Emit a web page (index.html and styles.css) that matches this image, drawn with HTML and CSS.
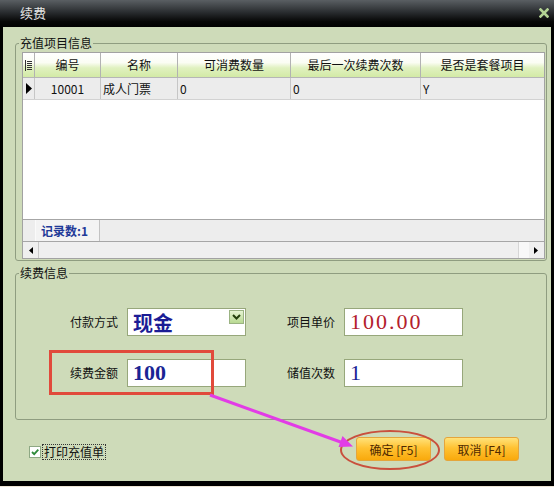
FILE: index.html
```html
<!DOCTYPE html>
<html lang="zh-CN">
<head>
  <meta charset="UTF-8">
  <title>续费</title>
  <link rel="stylesheet" href="styles.css">
</head>
<body>
  <div class="window">
    <div class="titlebar">
      <span class="title">续费</span>
      <svg class="close" viewBox="0 0 10 10"><path d="M1.5 1.5L8.5 8.5M8.5 1.5L1.5 8.5" stroke="#b3d394" stroke-width="2.6" stroke-linecap="square"/></svg>
    </div>

    <div class="body">
      <fieldset class="group group-items">
        <legend>充值项目信息</legend>
        <div class="grid">
          <div class="grid-head">
            <div class="cell ind">
              <svg width="7" height="11" viewBox="0 0 7 11"><path d="M0.5 0V11M2 1.5H7M2 3.5H7M2 5.5H7M2 7.5H7M2 9.5H7" stroke="#333" stroke-width="1"/></svg>
            </div>
            <div class="cell">编号</div>
            <div class="cell">名称</div>
            <div class="cell">可消费数量</div>
            <div class="cell">最后一次续费次数</div>
            <div class="cell">是否是套餐项目</div>
          </div>
          <div class="grid-row">
            <div class="cell ind">
              <svg width="6" height="11" viewBox="0 0 6 11"><path d="M0 0L6 5.5L0 11Z" fill="#000"/></svg>
            </div>
            <div class="cell center">10001</div>
            <div class="cell">成人门票</div>
            <div class="cell">0</div>
            <div class="cell">0</div>
            <div class="cell">Y</div>
          </div>
          <div class="grid-empty"></div>
          <div class="grid-foot">
            <span class="record-count">记录数:1</span>
          </div>
          <div class="hscroll">
            <span class="scroll-btn left">
              <svg width="4" height="7" viewBox="0 0 4 7"><path d="M4 0L0 3.5L4 7Z" fill="#000"/></svg>
            </span>
            <span class="scroll-track"></span>
            <span class="scroll-btn right">
              <svg width="4" height="7" viewBox="0 0 4 7"><path d="M0 0L4 3.5L0 7Z" fill="#000"/></svg>
            </span>
          </div>
        </div>
      </fieldset>

      <fieldset class="group group-renew">
        <legend>续费信息</legend>
        <div class="form">
          <label class="form-label">付款方式</label>
          <div class="field select">
            <span class="pay-type">现金</span>
            <span class="drop-btn">
              <svg width="9" height="6" viewBox="0 0 9 6"><path d="M1 1L4.5 4.5L8 1" fill="none" stroke="#24400c" stroke-width="2"/></svg>
            </span>
          </div>
          <label class="form-label">项目单价</label>
          <div class="field price">100.00</div>
          <label class="form-label">续费金额</label>
          <div class="field number bold">100</div>
          <label class="form-label">储值次数</label>
          <div class="field number">1</div>
        </div>
      </fieldset>

      <div class="actions">
        <div class="print">
          <span class="check">
            <svg width="10" height="10" viewBox="0 0 10 10"><path d="M2 5L4.2 7.2L8.3 2.6" fill="none" stroke="#2e8a3a" stroke-width="1.8"/></svg>
          </span>
          <span class="print-label">打印充值单</span>
        </div>
        <div class="buttons">
          <button class="btn">确定 [F5]</button>
          <button class="btn">取消 [F4]</button>
        </div>
      </div>
    </div>

    <!-- annotations -->
    <div class="mark-box"></div>
    <div class="mark-ring"></div>
    <svg class="mark-arrow" width="554" height="487" viewBox="0 0 554 487">
      <line x1="210" y1="395" x2="342" y2="442.5" stroke="#e23ce6" stroke-width="3"/>
      <polygon points="353,446.5 338.5,447 342.5,436" fill="#e23ce6"/>
    </svg>
  </div>
</body>
</html>
```

FILE: styles.css
```css
* {
  box-sizing: border-box;
}
body {
  margin: 0;
  background: #efe6d6;
  font-family: "Noto Sans CJK SC", "Liberation Sans", sans-serif;
  font-size: 12px;
  color: #111;
}
.window {
  position: relative;
  width: 554px;
  height: 486px;
  background: #000;
  padding: 0 3px 5px;
  display: flex;
  flex-direction: column;
}
.titlebar {
  height: 27px;
  margin: 0 -3px;
  padding: 0 5px 2px 20px;
  display: flex;
  align-items: center;
  justify-content: space-between;
  background: linear-gradient(#5a5f63, #2a2d30 45%, #060606 80%, #000);
}
.title {
  color: #e4e4e4;
  font-size: 13px;
  line-height: 16px;
}
.close {
  width: 10px;
  height: 10px;
}
.body {
  flex: 1;
  background: #cedbb9;
  display: flex;
  flex-direction: column;
}
/* group boxes */
.group {
  margin: 8px 4px 0 12px;
  padding: 1px 1px 1px 6px;
  border: 1px solid #8f9d80;
  border-radius: 3px;
  min-width: 0;
}
.group legend {
  padding: 0 1px;
  margin-left: -3px;
  line-height: 16px;
}
.group-renew {
  margin-top: 4px;
  padding: 27px 1px 32px 6px;
}
/* data grid */
.grid {
  height: 207px;
  border: 1px solid #a2a2a2;
  background: #fff;
  display: flex;
  flex-direction: column;
}
.grid-head,
.grid-row {
  display: grid;
  grid-template-columns: 12px 66px 77px 113px 130px 1fr;
}
.grid-head {
  height: 25px;
  border-bottom: 1px solid #b6b6b6;
  background: linear-gradient(#ffffff 0%, #fbfdf4 40%, #e0f1c0 62%, #d3eaa6 100%);
}
.grid-head .cell {
  display: flex;
  align-items: center;
  justify-content: center;
  border-right: 1px solid #b2b2b2;
  line-height: 16px;
}
.grid-head .cell:last-child {
  border-right: none;
}
.grid-row {
  height: 22px;
  background: #ececec;
  border-bottom: 1px solid #d2d2d2;
}
.grid-row .cell {
  border-right: 1px solid #c6c6c6;
  padding-left: 2px;
  line-height: 21px;
}
.grid-row .cell:last-child {
  border-right: none;
}
.grid-row .center {
  text-align: center;
  padding-left: 0;
}
.cell.ind {
  display: flex;
  align-items: center;
  justify-content: center;
  padding-left: 0;
}
.grid-empty {
  flex: 1;
}
.grid-foot {
  height: 22px;
  border-top: 1px solid #a6a6a6;
  background: #ededed;
  padding-left: 12px;
  display: flex;
}
.record-count {
  width: 65px;
  padding-left: 5px;
  border-left: 1px solid #fafafa;
  border-right: 1px solid #c2c2c2;
  background: #f3f3f3;
  color: #1f3a98;
  font-weight: bold;
  line-height: 21px;
}
.hscroll {
  height: 17px;
  border-top: 1px solid #a6a6a6;
  background: #efefef;
  display: flex;
}
.scroll-btn {
  width: 16px;
  display: flex;
  align-items: center;
  justify-content: center;
}
.scroll-btn.left {
  border-right: 1px solid #c8c8c8;
}
.scroll-btn.right {
  width: 26px;
  border-left: 1px solid #d6d6d6;
  background: linear-gradient(90deg, #f8f8f8 0 10px, #efefef 10px);
  justify-content: flex-end;
  padding-right: 6px;
}
.scroll-track {
  flex: 1;
}
/* renew form */
.form {
  display: grid;
  grid-template-columns: 96px 119px 80px 119px;
  grid-auto-rows: 28px;
  column-gap: 9px;
  row-gap: 23px;
}
.form-label {
  display: flex;
  align-items: center;
  justify-content: flex-end;
  line-height: 16px;
}
.field {
  position: relative;
  display: flex;
  align-items: center;
  padding-left: 5px;
  border: 1px solid #97a77b;
  background: #fff;
}
.pay-type {
  color: #1b1c95;
  font-size: 20px;
  font-weight: bold;
  line-height: 24px;
  margin-top: 2px;
}
.drop-btn {
  position: absolute;
  top: 1px;
  right: 1px;
  width: 15px;
  height: 14px;
  display: flex;
  align-items: center;
  justify-content: center;
  border: 1px solid #9bb383;
  background: linear-gradient(#e6f4d2, #b8d992);
}
.price {
  color: #b3202c;
  font-family: "Liberation Serif", serif;
  font-size: 22px;
  letter-spacing: 2px;
}
.number {
  color: #1a2494;
  font-family: "Liberation Serif", serif;
  font-size: 22px;
}
.number.bold {
  font-weight: bold;
}
/* bottom bar */
.actions {
  flex: 1;
  display: flex;
  align-items: flex-start;
  padding: 17px 32px 0 26px;
}
.print {
  display: flex;
  align-items: center;
  margin-top: 7px;
}
.check {
  width: 12px;
  height: 12px;
  display: flex;
  align-items: center;
  justify-content: center;
  border: 1px solid #8ea884;
  background: #fff;
}
.print-label {
  margin-left: 1px;
  padding: 0 1px;
  border: 1px dotted #333;
  line-height: 14px;
}
.buttons {
  margin-left: auto;
  display: flex;
  gap: 13px;
}
.btn {
  width: 75px;
  height: 24px;
  padding: 0;
  font-family: "Noto Sans CJK SC", "Liberation Sans", sans-serif;
  font-size: 12px;
  color: #4f2a00;
  border: 1px solid #e4a53c;
  border-radius: 3px;
  background: linear-gradient(#ffe27a, #ffc232 45%, #f9a90c 100%);
  cursor: pointer;
}
/* annotations drawn over the dialog */
.mark-box {
  position: absolute;
  left: 49px;
  top: 350px;
  width: 165px;
  height: 45px;
  border: 3px solid #e14a3b;
}
.mark-ring {
  position: absolute;
  left: 340px;
  top: 430px;
  width: 100px;
  height: 40px;
  border: 2px solid #c9503d;
  border-radius: 50%;
}
.mark-arrow {
  position: absolute;
  left: 0;
  top: 0;
  pointer-events: none;
}
```
